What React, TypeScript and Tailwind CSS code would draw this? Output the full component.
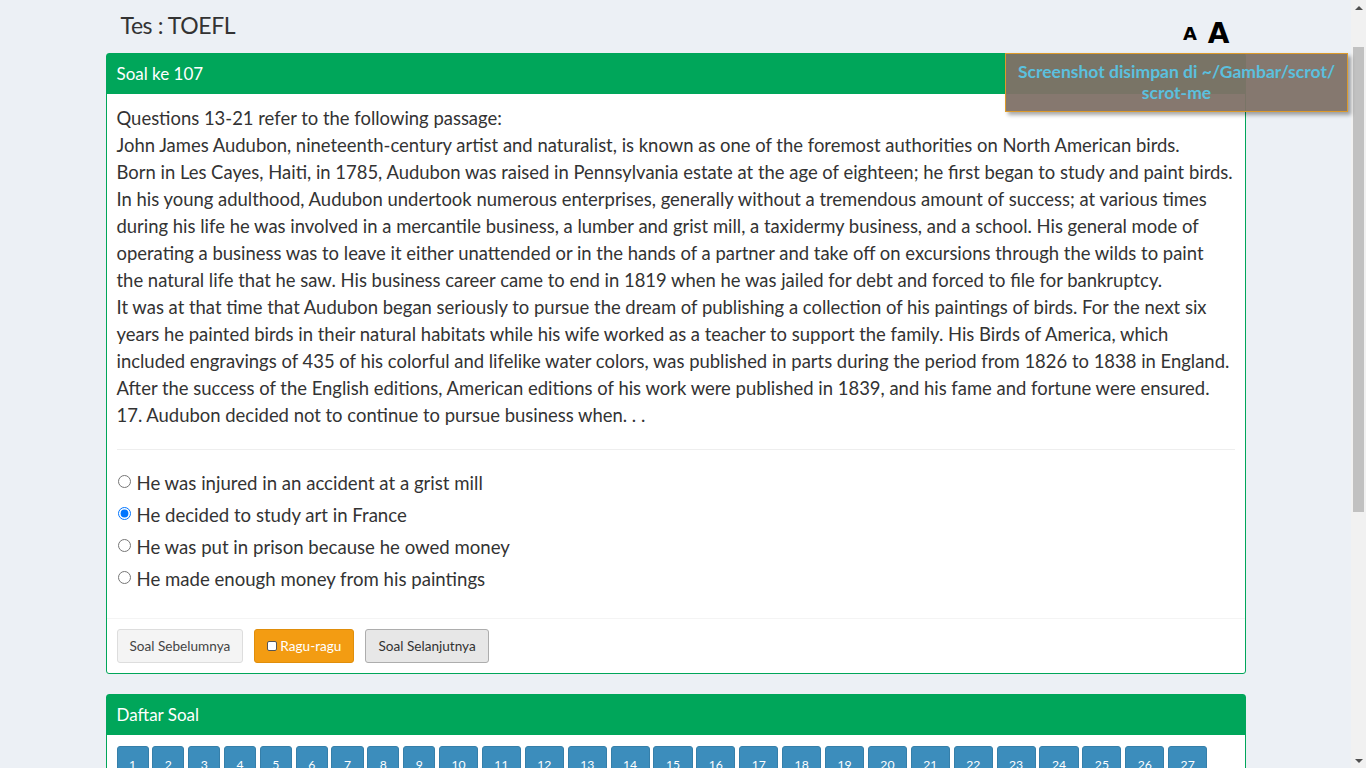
import { useState } from "react";

const PASSAGE = [
  "Questions 13-21 refer to the following passage:",
  "John James Audubon, nineteenth-century artist and naturalist, is known as one of the foremost authorities on North American birds.",
  "Born in Les Cayes, Haiti, in 1785, Audubon was raised in Pennsylvania estate at the age of eighteen; he first began to study and paint birds.",
  "In his young adulthood, Audubon undertook numerous enterprises, generally without a tremendous amount of success; at various times",
  "during his life he was involved in a mercantile business, a lumber and grist mill, a taxidermy business, and a school. His general mode of",
  "operating a business was to leave it either unattended or in the hands of a partner and take off on excursions through the wilds to paint",
  "the natural life that he saw. His business career came to end in 1819 when he was jailed for debt and forced to file for bankruptcy.",
  "It was at that time that Audubon began seriously to pursue the dream of publishing a collection of his paintings of birds. For the next six",
  "years he painted birds in their natural habitats while his wife worked as a teacher to support the family. His Birds of America, which",
  "included engravings of 435 of his colorful and lifelike water colors, was published in parts during the period from 1826 to 1838 in England.",
  "After the success of the English editions, American editions of his work were published in 1839, and his fame and fortune were ensured.",
  "17. Audubon decided not to continue to pursue business when. . .",
];

const OPTIONS = [
  "He was injured in an accident at a grist mill",
  "He decided to study art in France",
  "He was put in prison because he owed money",
  "He made enough money from his paintings",
];

const TOTAL = 140;

function Scrollbar() {
  return (
    <div className="sticky top-0 flex h-screen w-[15px] shrink-0 flex-col bg-[#f1f1f1]">
      <div className="flex h-[15px] items-center justify-center">
        <span className="h-0 w-0 border-x-[4px] border-b-[4px] border-x-transparent border-b-[#505050]" />
      </div>
      <div className="mx-[2px] mt-[32px] h-[465px] bg-[#c1c1c1]" />
      <div className="flex-1" />
      <div className="flex h-[15px] items-center justify-center">
        <span className="h-0 w-0 border-x-[4px] border-t-[4px] border-x-transparent border-t-[#505050]" />
      </div>
    </div>
  );
}

export default function App() {
  const [answer, setAnswer] = useState(1);
  const nums = Array.from({ length: TOTAL }, (_, i) => i + 1);

  return (
    <div className="relative flex bg-[#ecf0f5] text-[#333] font-['Lato','Liberation_Sans',sans-serif]">
      <main className="min-h-[1210px] min-w-0 flex-1">
        <div className="mx-auto w-[1170px] px-[15px]">
          <div className="flex items-end justify-between pl-[15px] pr-[16px] pt-[11px]">
            <h1 className="text-[23px] leading-[28px] tracking-[-0.4px]">Tes : TOEFL</h1>
            <div className="mb-[-9px] flex items-center gap-[11px] font-['DejaVu_Sans',sans-serif] font-bold text-black">
              <span className="text-[18px] leading-none">A</span>
              <span className="text-[28px] leading-none">A</span>
            </div>
          </div>

          <div className="mt-[14px] rounded-[3px] border border-[#00a65a] bg-white">
            <div className="bg-[#00a65a] px-[10px] py-[10px] text-[17px] leading-[20px] text-white">Soal ke 107</div>
            <div className="px-[10px] pt-[11px]">
              <div className="text-[18.45px] leading-[27px]">
                {PASSAGE.map((l) => (
                  <div key={l} className="whitespace-nowrap">{l}</div>
                ))}
              </div>
              <hr className="mt-[20px] border-t border-[#eee]" />
              <div className="pb-[22px] pt-[18px] text-[18.6px]">
                {OPTIONS.map((o, i) => (
                  <label key={o} className="flex h-[32px] items-center gap-[6px]">
                    <input
                      type="radio"
                      name="jawab"
                      checked={answer === i}
                      onChange={() => setAnswer(i)}
                      className="mb-[5px] ml-[1px] h-[13px] w-[13px]"
                    />
                    <span>{o}</span>
                  </label>
                ))}
              </div>
            </div>
            <div className="flex gap-[11px] border-t border-[#f4f4f4] p-[10px] text-[13.6px]">
              <button className="h-[34px] rounded-[3px] border border-[#ddd] bg-[#f4f4f4] px-[12px] text-[#444]">Soal Sebelumnya</button>
              <button className="flex h-[34px] items-center gap-[3px] rounded-[3px] border border-[#e08e0b] bg-[#f39c12] px-[12px] text-white">
                <span className="inline-block h-[10px] w-[10px] rounded-[2px] border border-[#555] bg-white" />
                Ragu-ragu
              </button>
              <button className="h-[34px] rounded-[3px] border border-[#adadad] bg-[#e7e7e7] px-[12px] text-[#333]">Soal Selanjutnya</button>
            </div>
          </div>

          <div className="mt-[20px] rounded-[3px] border border-[#00a65a] bg-white">
            <div className="bg-[#00a65a] px-[10px] py-[10px] text-[17px] leading-[20px] text-white">Daftar Soal</div>
            <div className="flex flex-wrap gap-[3.75px] px-[10px] pb-[10px] pt-[11px]">
              {nums.map((n) => (
                <button
                  key={n}
                  className="h-[30px] rounded-[3px] border border-[#367fa9] bg-[#3c8dbc] px-[11.5px] pt-[7px] text-[12.2px] leading-[20px] text-white"
                >
                  {n}
                </button>
              ))}
            </div>
          </div>
        </div>
      </main>

      <Scrollbar />

      <div className="absolute left-[1005px] top-[53px] flex h-[59px] w-[343px] flex-col items-center justify-center border border-[#dc9a2a] bg-[#7f7167]/95 pb-[2px] text-center text-[17.5px] font-bold leading-[21px] text-[#5bc0de] shadow-[3px_3px_4px_rgba(0,0,0,0.35)]">
        <div>Screenshot disimpan di ~/Gambar/scrot/</div>
        <div>scrot-me</div>
      </div>
    </div>
  );
}
